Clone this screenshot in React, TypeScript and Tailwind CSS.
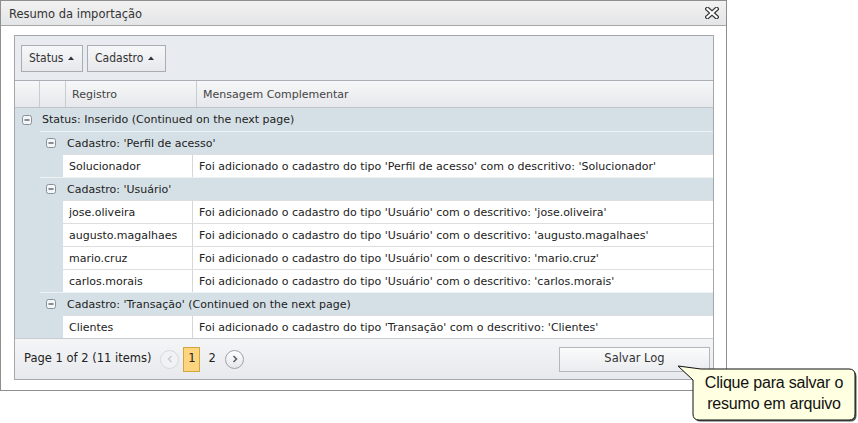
import React from "react";

// Dialog "Resumo da importação" with a grouped grid, pager and a balloon tip

const groupBg = "bg-[#d5e0e6]";

type Row = { registro: string; tipo: string };

const groups: { title: string; rows: Row[] }[] = [
  {
    title: "Cadastro: 'Perfil de acesso'",
    rows: [{ registro: "Solucionador", tipo: "Perfil de acesso" }],
  },
  {
    title: "Cadastro: 'Usuário'",
    rows: [
      { registro: "jose.oliveira", tipo: "Usuário" },
      { registro: "augusto.magalhaes", tipo: "Usuário" },
      { registro: "mario.cruz", tipo: "Usuário" },
      { registro: "carlos.morais", tipo: "Usuário" },
    ],
  },
  {
    title: "Cadastro: 'Transação' (Continued on the next page)",
    rows: [{ registro: "Clientes", tipo: "Transação" }],
  },
];

function Expander() {
  return (
    <svg width="10" height="10" viewBox="0 0 10 10" className="shrink-0">
      <rect x="0.5" y="0.5" width="9" height="9" rx="2" fill="#f4f6f7" stroke="#86919a" />
      <line x1="2.5" y1="5" x2="7.5" y2="5" stroke="#3f4850" strokeWidth="1.2" />
    </svg>
  );
}

function SortUp() {
  return (
    <svg width="6" height="4" viewBox="0 0 6 4" className="ml-[5px]">
      <path d="M0 4 L3 0.5 L6 4 Z" fill="#333" />
    </svg>
  );
}

function CloseIcon() {
  return (
    <svg width="14" height="12" viewBox="0 0 14 12">
      <path d="M2.5 2 L11.5 10 M11.5 2 L2.5 10" stroke="#3a3a3a" strokeWidth="4.6" strokeLinecap="square" />
      <path d="M2.5 2 L11.5 10 M11.5 2 L2.5 10" stroke="#ffffff" strokeWidth="2.2" strokeLinecap="square" />
    </svg>
  );
}

function PagerArrow({ dir, disabled }: { dir: "left" | "right"; disabled?: boolean }) {
  const c = disabled ? "#c9ccd0" : "#5b6068";
  return (
    <div
      className={`w-[19px] h-[19px] rounded-full border flex items-center justify-center ${
        disabled
          ? "border-[#d6d9dc] bg-[#f1f2f4]"
          : "border-[#9ea3a9] bg-gradient-to-b from-white to-[#e3e6ea]"
      }`}
    >
      <svg width="6" height="8" viewBox="0 0 6 8">
        <path
          d={dir === "left" ? "M4.5 1 L1.5 4 L4.5 7" : "M1.5 1 L4.5 4 L1.5 7"}
          stroke={c}
          strokeWidth="1.6"
          fill="none"
        />
      </svg>
    </div>
  );
}

function GroupButton({ label, w }: { label: string; w: string }) {
  return (
    <div
      className={`${w} h-[27px] border border-[#a9adb3] bg-gradient-to-b from-[#f6f7f8] to-[#e6e8ec] flex items-center pl-[7px] text-[#333]`}
    >
      {label}
      <SortUp />
    </div>
  );
}

function DataRow({ row }: { row: Row }) {
  return (
    <div className="h-[23px] flex bg-white border-t border-[#dcdfe2]">
      <div className="w-[130px] border-r border-[#d3d6da] pl-[6px] flex items-center text-[#222]">
        {row.registro}
      </div>
      <div className="flex-1 pl-[6px] flex items-center text-[#222] whitespace-nowrap">
        Foi adicionado o cadastro do tipo '{row.tipo}' com o descritivo: '{row.registro}'
      </div>
    </div>
  );
}

export default function App() {
  return (
    <div className="relative w-[858px] h-[423px] bg-white font-['DejaVu_Sans',sans-serif] text-[11px] leading-none">
      {/* dialog */}
      <div className="w-[727px] h-[391px] border border-[#8e8e8e] bg-white flex flex-col">
        <div className="h-[25px] shrink-0 border-b border-[#a7a7a7] bg-gradient-to-b from-[#f2f2f2] to-[#e4e5e7] flex items-center justify-between pl-[8px] pr-[7px]">
          <span className="text-[#333] text-[11.5px] pt-[3px]">Resumo da importação</span>
          <CloseIcon />
        </div>

        <div className="flex-1 pl-[13px] pr-[12px] pt-[9px]">
          <div className="w-[700px] h-[345px] border border-[#a4a8ad] flex flex-col">
            {/* group panel */}
            <div className="h-[45px] shrink-0 bg-[#e8ebef] border-b border-[#a9aeb4] flex items-center gap-[4px] pl-[6px] text-[12px] font-['DejaVu_Sans_Condensed','DejaVu_Sans',sans-serif]">
              <GroupButton label="Status" w="w-[62px]" />
              <GroupButton label="Cadastro" w="w-[79px]" />
            </div>

            {/* header */}
            <div className="h-[27px] shrink-0 border-b border-[#bfc4ca] bg-gradient-to-b from-[#f6f7f8] to-[#e6e8ec] flex text-[#444]">
              <div className="w-[25px] border-r border-[#c8ccd1]" />
              <div className="w-[26px] border-r border-[#c8ccd1]" />
              <div className="w-[131px] border-r border-[#c8ccd1] pl-[6px] flex items-center">Registro</div>
              <div className="flex-1 pl-[6px] flex items-center">Mensagem Complementar</div>
            </div>

            {/* rows */}
            <div className={`h-[23px] shrink-0 ${groupBg} flex items-center pl-[7px] gap-[10px] text-[#222]`}>
              <Expander />
              <span>Status: Inserido (Continued on the next page)</span>
            </div>
            <div className="flex shrink-0">
              <div className={`w-[25px] ${groupBg}`} />
              <div className="flex-1">
                {groups.map((g) => (
                  <div key={g.title}>
                    <div className={`h-[23px] border-t border-[#eef3f6] ${groupBg} flex items-center pl-[6px] gap-[11px] text-[#222]`}>
                      <Expander />
                      <span>{g.title}</span>
                    </div>
                    <div className="flex">
                      <div className={`w-[23px] ${groupBg}`} />
                      <div className="flex-1">
                        {g.rows.map((r) => (
                          <DataRow key={r.registro} row={r} />
                        ))}
                      </div>
                    </div>
                  </div>
                ))}
              </div>
            </div>
            <div className="flex-1 bg-white" />

            {/* footer / pager */}
            <div className="h-[41px] shrink-0 border-t border-[#c9cdd2] bg-gradient-to-b from-[#f4f5f7] to-[#e7e9ec] flex items-center pl-[9px] pr-[3px] text-[11.5px] text-[#222]">
              <span>Page 1 of 2 (11 items)</span>
              <div className="ml-[9px]">
                <PagerArrow dir="left" disabled />
              </div>
              <div className="ml-[4px] w-[17px] h-[25px] border border-[#d3a53f] bg-[#fdd57f] flex items-center justify-center">
                1
              </div>
              <div className="ml-[8px] w-[8px]">2</div>
              <div className="ml-[9px]">
                <PagerArrow dir="right" />
              </div>
              <div className="ml-auto w-[151px] h-[25px] border border-[#b4b8be] bg-gradient-to-b from-[#fbfbfc] to-[#eaecef] flex items-center justify-center text-[#333]">
                Salvar Log
              </div>
            </div>
          </div>
        </div>
      </div>

      {/* balloon tip */}
      <div className="absolute left-[675px] top-[363px] w-[183px] h-[60px]">
        <svg width="183" height="60" viewBox="0 0 183 60" className="absolute left-0 top-0">
          <path
            d="M3 3 L26 6 L174 6 Q180 6 180 12 L180 51 Q180 57 174 57 L24 57 Q18 57 18 51 L18 17 Z"
            fill="#555"
            transform="translate(1.5 1.5)"
          />
          <path
            d="M3 3 L26 6 L174 6 Q180 6 180 12 L180 51 Q180 57 174 57 L24 57 Q18 57 18 51 L18 17 Z"
            fill="#ffffe1"
            stroke="#111"
            strokeWidth="1"
          />
        </svg>
        <div className="absolute left-[18px] top-[9px] w-[162px] text-center font-['Liberation_Sans',Arial,sans-serif] text-[16px] leading-[21px] text-[#111] tracking-[-0.2px]">
          Clique para salvar o<br />
          resumo em arquivo
        </div>
      </div>
    </div>
  );
}
